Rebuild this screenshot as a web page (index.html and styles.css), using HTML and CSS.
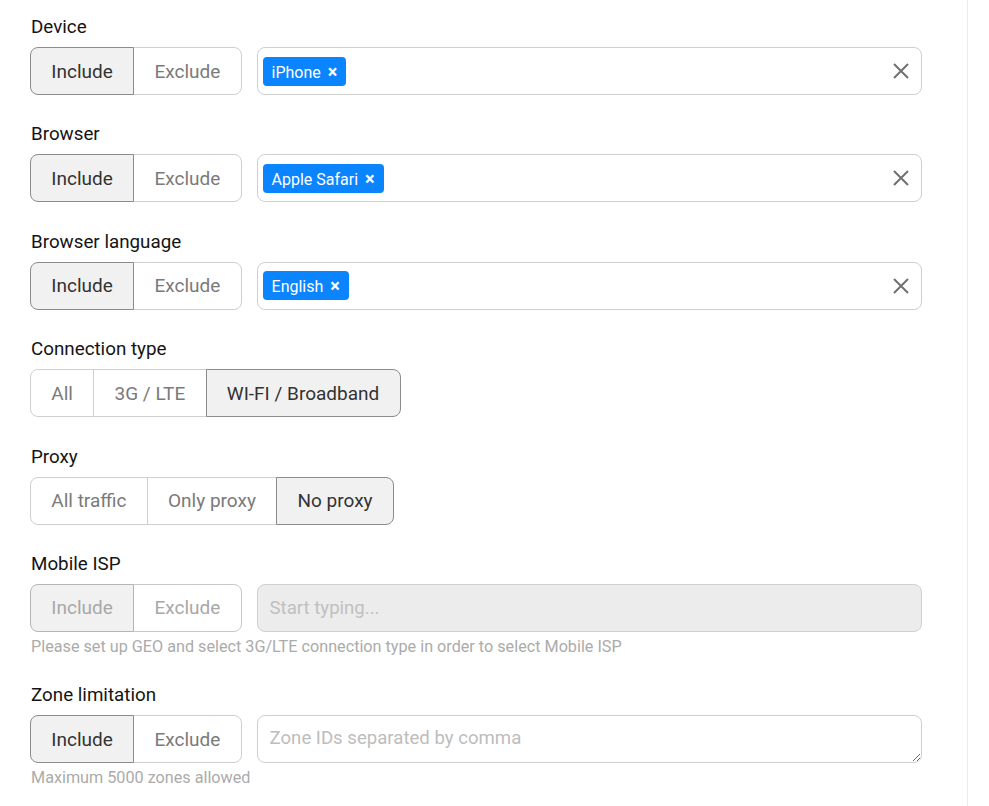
FILE: index.html
```html
<!DOCTYPE html>
<html>
<head>
<meta charset="utf-8">
<link rel="stylesheet" href="styles.css">
</head>
<body>
<div class="page">
  <div class="section">
    <div class="label">Device</div>
    <div class="row">
      <div class="toggle">
        <button class="tbtn active">Include</button>
        <button class="tbtn">Exclude</button>
      </div>
      <div class="tags">
        <span class="chip">iPhone <span class="chip-x">×</span></span>
        <span class="clear"><svg width="18" height="18" viewBox="0 0 18 18"><path d="M2 2L16 16M16 2L2 16" stroke="#707070" stroke-width="2" fill="none"/></svg></span>
      </div>
    </div>
  </div>

  <div class="section">
    <div class="label">Browser</div>
    <div class="row">
      <div class="toggle">
        <button class="tbtn active">Include</button>
        <button class="tbtn">Exclude</button>
      </div>
      <div class="tags">
        <span class="chip">Apple Safari <span class="chip-x">×</span></span>
        <span class="clear"><svg width="18" height="18" viewBox="0 0 18 18"><path d="M2 2L16 16M16 2L2 16" stroke="#707070" stroke-width="2" fill="none"/></svg></span>
      </div>
    </div>
  </div>

  <div class="section">
    <div class="label">Browser language</div>
    <div class="row">
      <div class="toggle">
        <button class="tbtn active">Include</button>
        <button class="tbtn">Exclude</button>
      </div>
      <div class="tags">
        <span class="chip">English <span class="chip-x">×</span></span>
        <span class="clear"><svg width="18" height="18" viewBox="0 0 18 18"><path d="M2 2L16 16M16 2L2 16" stroke="#707070" stroke-width="2" fill="none"/></svg></span>
      </div>
    </div>
  </div>

  <div class="section">
    <div class="label">Connection type</div>
    <div class="row">
      <div class="toggle">
        <button class="tbtn">All</button>
        <button class="tbtn">3G / LTE</button>
        <button class="tbtn active">WI-FI / Broadband</button>
      </div>
    </div>
  </div>

  <div class="section">
    <div class="label">Proxy</div>
    <div class="row">
      <div class="toggle">
        <button class="tbtn">All traffic</button>
        <button class="tbtn">Only proxy</button>
        <button class="tbtn active">No proxy</button>
      </div>
    </div>
  </div>

  <div class="section">
    <div class="label">Mobile ISP</div>
    <div class="row">
      <div class="toggle disabled">
        <button class="tbtn active">Include</button>
        <button class="tbtn">Exclude</button>
      </div>
      <input class="field disabled-field" placeholder="Start typing..." disabled>
    </div>
    <div class="hint">Please set up GEO and select 3G/LTE connection type in order to select Mobile ISP</div>
  </div>

  <div class="section">
    <div class="label">Zone limitation</div>
    <div class="row">
      <div class="toggle">
        <button class="tbtn active">Include</button>
        <button class="tbtn">Exclude</button>
      </div>
      <textarea class="field area" placeholder="Zone IDs separated by comma"></textarea>
    </div>
    <div class="hint">Maximum 5000 zones allowed</div>
  </div>
</div>
</body>
</html>
```
FILE: styles.css
```css
* { box-sizing: border-box; }
html, body { margin: 0; padding: 0; background: #fff; }
body { font-family: Roboto, "Liberation Sans", sans-serif; color: #111; }

.page {
  width: 968px;
  min-height: 806px;
  border-right: 1px solid #ececec;
  padding: 17px 45px 0 30px;
}

.section { margin-bottom: 29.4px; }

.label {
  font-size: 18.8px;
  line-height: 20px;
  height: 20px;
  margin-bottom: 10px;
  color: #141414;
  padding-left: 1px;
}

.row {
  display: flex;
  align-items: stretch;
  gap: 15px;
  height: 48px;
}

.toggle { display: flex; flex: none; }

.tbtn {
  font-family: Roboto, "Liberation Sans", sans-serif;
  font-size: 19px;
  color: #7a7a7a;
  background: #fff;
  border: 1px solid #cfcfcf;
  padding: 0 20.3px;
  margin: 0 0 0 -1px;
  height: 48px;
  position: relative;
  cursor: pointer;
}
.tbtn:first-child { margin-left: 0; border-radius: 8px 0 0 8px; }
.tbtn:last-child { border-radius: 0 8px 8px 0; }
.tbtn.active {
  background: #f1f1f1;
  border-color: #8c8c8c;
  color: #333;
  z-index: 1;
}

.toggle.disabled .tbtn { color: #a8a8a8; border-color: #c8c8c8; }
.toggle.disabled .tbtn.active { background: #f1f1f1; border-color: #b5b5b5; color: #a8a8a8; }

.tags {
  flex: 1;
  border: 1px solid #cfcfcf;
  border-radius: 8px;
  display: flex;
  align-items: center;
  padding: 0 11px 0 5px;
}

.chip {
  background: #0a84ff;
  color: #fff;
  font-size: 16px;
  font-weight: 400;
  height: 29px;
  line-height: 29px;
  padding: 0 9px;
  border-radius: 4px;
  white-space: nowrap;
}
.chip-x { font-weight: 700; margin-left: 3px; font-size: 18px; }

.clear { margin-left: auto; display: flex; align-items: center; }

.field {
  flex: 1;
  border: 1px solid #cfcfcf;
  border-radius: 8px;
  font-family: Roboto, "Liberation Sans", sans-serif;
  font-size: 18.6px;
  padding: 0 12px;
  color: #333;
  height: 48px;
  outline: none;
}
.field::placeholder { color: #bdbdbd; }
.disabled-field { background: #ececec; border-color: #d0d0d0; }
.disabled-field::placeholder { color: #c0c0c0; }

.area {
  resize: vertical;
  padding: 10px 12px;
  line-height: 24px;
  min-height: 48px;
}

.hint {
  font-size: 16.2px;
  line-height: 18px;
  color: #ababab;
  margin-top: 6px;
  padding-left: 1px;
}
```
